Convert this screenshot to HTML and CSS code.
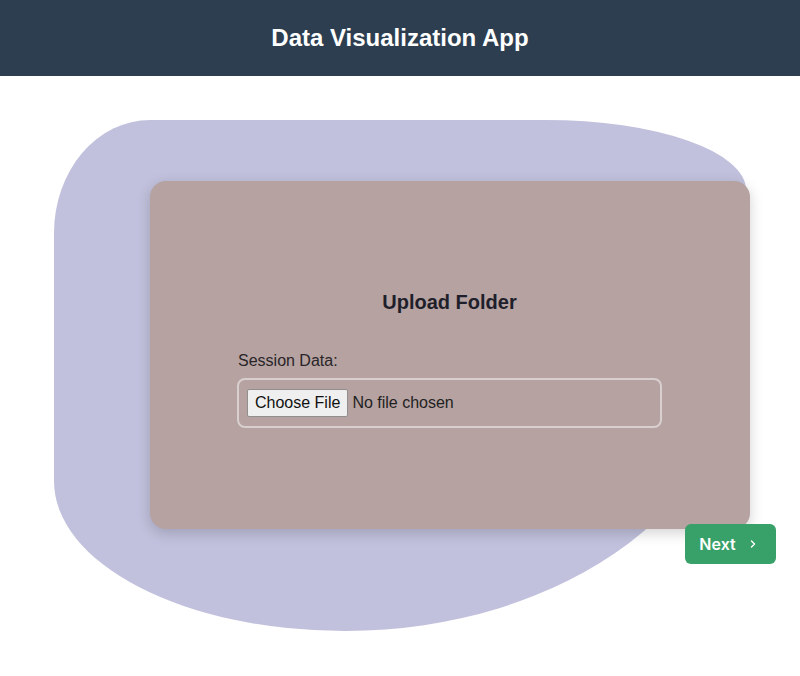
FILE: index.html
```html
<!DOCTYPE html>
<html>
<head>
<meta charset="utf-8">
<title>Data Visualization App</title>
<link rel="stylesheet" href="styles.css">
</head>
<body>
<header class="app-header">
  <h1 class="app-title">Data Visualization App</h1>
</header>
<main class="stage">
  <div class="blob" aria-hidden="true"></div>
  <div class="panel">
    <section class="card">
      <h2 class="card-title">Upload Folder</h2>
      <div class="field">
        <label class="field-label" for="session">Session Data:</label>
        <div class="file-box">
          <input class="file-input" id="session" type="file" webkitdirectory>
        </div>
      </div>
    </section>
    <div class="actions">
      <button class="next-btn" type="button">Next <span class="chev">
        <svg width="10" height="10" viewBox="0 0 10 10"><path d="M3.5 2 L6.5 5 L3.5 8" fill="none" stroke="#fff" stroke-width="1.4" stroke-linecap="round" stroke-linejoin="round"/></svg>
      </span></button>
    </div>
  </div>
</main>
</body>
</html>
```

FILE: styles.css
```css
html, body {
  margin: 0;
  padding: 0;
  background: #ffffff;
  font-family: "Liberation Sans", Arial, sans-serif;
}

.app-header {
  height: 76px;
  background: #2c3e50;
  display: flex;
  align-items: center;
  justify-content: center;
}

.app-title {
  margin: 0;
  color: #ffffff;
  font-size: 24px;
  font-weight: 700;
}

.stage {
  position: relative;
  height: 600px;
}

.blob {
  position: absolute;
  left: 54px;
  top: 44px;
  width: 692px;
  height: 511px;
  background: #c1c1dd;
  border-radius: 96px 200px 400px 290px / 113px 70px 300px 150px;
}

.panel {
  position: relative;
  margin-left: 150px;
  padding-top: 105px;
  width: 626px;
}

.card {
  width: 600px;
  height: 348px;
  box-sizing: border-box;
  background: #b5a2a1;
  border-radius: 16px;
  box-shadow: 0 4px 14px rgba(0, 0, 0, 0.18);
  display: flex;
  flex-direction: column;
  align-items: center;
  justify-content: center;
  padding: 8px 88px 0 87px;
}

.card-title {
  margin: 0 0 38px;
  font-size: 20px;
  font-weight: 700;
  color: #1f1f2b;
}

.field {
  width: 425px;
  display: flex;
  flex-direction: column;
}

.field-label {
  font-size: 16px;
  color: #2a2528;
  margin: 0 0 8px 1px;
}

.file-box {
  border: 2px solid #d9cfcf;
  border-radius: 8px;
  padding: 8px;
  height: 30px;
  display: flex;
  align-items: center;
}

.file-input {
  font-family: "Liberation Sans", Arial, sans-serif;
  font-size: 16px;
  color: #1f1f1f;
}

.file-input::file-selector-button {
  font-family: "Liberation Sans", Arial, sans-serif;
  font-size: 16px;
  color: #111;
  background: #efefef;
  border: 1px solid #8f8f8f;
  border-radius: 2px;
  padding: 4px 7px;
  margin-right: 4px;
}

.actions {
  display: flex;
  justify-content: flex-end;
  margin-top: -5px;
  position: relative;
}

.next-btn {
  width: 91px;
  height: 40px;
  background: #38a169;
  color: #ffffff;
  border: none;
  border-radius: 6px;
  font-family: Inter, "Noto Sans", sans-serif;
  font-size: 16px;
  font-weight: 600;
  display: flex;
  align-items: center;
  justify-content: center;
  gap: 12px;
  padding: 0 4px 0 0;
}

.chev {
  display: flex;
  align-items: center;
}
```
